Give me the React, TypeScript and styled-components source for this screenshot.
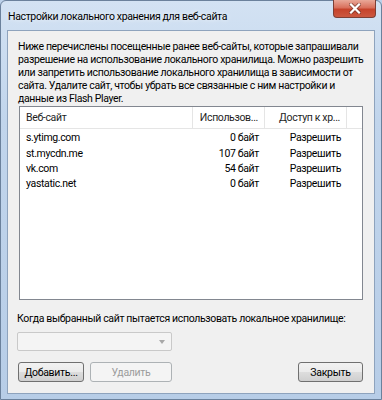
import React, {FC} from 'react';
import styled, {createGlobalStyle} from 'styled-components';

type Site = {
  host: string
  used: string
  access: string
};

const sites: Site[] = [
  {host: 's.ytimg.com', used: '0 байт', access: 'Разрешить'},
  {host: 'st.mycdn.me', used: '107 байт', access: 'Разрешить'},
  {host: 'vk.com', used: '54 байт', access: 'Разрешить'},
  {host: 'yastatic.net', used: '0 байт', access: 'Разрешить'},
];

// wrapped the same way as the dialog does it
const introLines = [
  'Ниже перечислены посещенные ранее веб-сайты, которые запрашивали',
  'разрешение на использование локального хранилища. Можно разрешить',
  'или запретить использование локального хранилища в зависимости от',
  'сайта. Удалите сайт, чтобы убрать все связанные с ним настройки и',
  'данные из Flash Player.',
];

const GlobalStyle = createGlobalStyle`
  html, body {
    margin: 0;
    padding: 0;
    background: #bcd1ea;
  }
  body {
    font-family: Roboto, "Noto Sans", "DejaVu Sans", sans-serif;
  }
`

const CloseIcon: FC = () => (
  <svg width="12" height="11" viewBox="0 0 12 11">
    <path d="M2 1.5 L10 9.5 M10 1.5 L2 9.5" stroke="#5a2a22" strokeWidth="4" strokeLinecap="square" opacity="0.55" />
    <path d="M2 1.5 L10 9.5 M10 1.5 L2 9.5" stroke="#ffffff" strokeWidth="2.2" strokeLinecap="square" />
  </svg>
);

const App: FC = () => {
  return (
    <>
      <GlobalStyle />
      <Window>
        <TitleBar>
          <Title>Настройки локального хранения для веб-сайта</Title>
          <CloseButton>
            <CloseIcon />
          </CloseButton>
        </TitleBar>
        <Client>
          <Intro>
            {introLines.map(line => (
              <IntroLine key={line}>{line}</IntroLine>
            ))}
          </Intro>

          <ListView>
            <HeaderRow>
              <HeaderCell $align="left">Веб-сайт</HeaderCell>
              <HeaderCell $align="right">Использов...</HeaderCell>
              <HeaderCell $align="right">Доступ к хр...</HeaderCell>
              <HeaderFiller />
            </HeaderRow>
            {sites.map(site => (
              <Row key={site.host}>
                <Cell $align="left">{site.host}</Cell>
                <Cell $align="right">{site.used}</Cell>
                <Cell $align="right">{site.access}</Cell>
              </Row>
            ))}
          </ListView>

          <Label>Когда выбранный сайт пытается использовать локальное хранилище:</Label>
          <Combo>
            <ComboArrow />
          </Combo>

          <ButtonBar>
            <Button type="button">Добавить...</Button>
            <Button type="button" disabled $width={82}>Удалить</Button>
            <Spacer />
            <Button type="button" $width={65}>Закрыть</Button>
          </ButtonBar>
        </Client>
      </Window>
    </>
  );
};

export default App;

const Window = styled.div`
  width: 382px;
  height: 400px;
  box-sizing: border-box;
  display: flex;
  flex-direction: column;
  border: 1px solid #6b819c;
  border-radius: 6px 6px 0 0;
  background: linear-gradient(180deg, #d3e2f3 0%, #c1d5ec 30%, #b7cde7 100%);
`

const TitleBar = styled.div`
  height: 29px;
  flex-shrink: 0;
  display: flex;
  align-items: flex-start;
  justify-content: space-between;
  padding-left: 7px;
  padding-right: 5px;
`

const Title = styled.div`
  margin-top: 8px;
  font-size: 10.5px;
  line-height: 15px;
  letter-spacing: -0.35px;
  color: #000000;
  text-shadow: 0 0 5px rgba(255, 255, 255, 0.9);
  white-space: nowrap;
`

const CloseButton = styled.div`
  width: 43px;
  height: 18px;
  margin-top: -1px;
  display: flex;
  align-items: center;
  justify-content: center;
  box-sizing: border-box;
  border: 1px solid #7d3f35;
  border-top: none;
  border-radius: 0 0 4px 4px;
  background: linear-gradient(180deg, #e9a898 0%, #d9705c 45%, #c6432b 55%, #cc5840 100%);
`

const Client = styled.div`
  flex: 1;
  margin: 0 6px 5px 6px;
  padding: 9px 11px 0 10px;
  display: flex;
  flex-direction: column;
  background: #f0f0f0;
  border: 1px solid #8ea3bd;
  font-size: 10.5px;
  line-height: 13px;
  letter-spacing: -0.35px;
  color: #000000;
`

const Intro = styled.div`
  display: flex;
  flex-direction: column;
`

const IntroLine = styled.span`
  white-space: nowrap;
`

const ListView = styled.div`
  margin: 1px 0 0 1px;
  height: 194px;
  flex-shrink: 0;
  box-sizing: border-box;
  background: #ffffff;
  border: 1px solid #828790;
`

const HeaderRow = styled.div`
  display: grid;
  grid-template-columns: 173px 72px 82px 1fr;
  height: 21px;
  border-bottom: 1px solid #e5e5e5;
  margin-bottom: 1px;
`

const HeaderCell = styled.div<{ $align: 'left' | 'right' }>`
  display: flex;
  align-items: center;
  justify-content: ${p => (p.$align === 'left' ? 'flex-start' : 'flex-end')};
  padding: 0 6px;
  border-right: 1px solid #e5e5e5;
  white-space: nowrap;
  color: #1e1e1e;
`

const HeaderFiller = styled.div`
  width: 16px;
`

const Row = styled.div`
  display: grid;
  grid-template-columns: 173px 72px 82px;
  height: 15.4px;
  align-items: center;
`

const Cell = styled.div<{ $align: 'left' | 'right' }>`
  padding-left: ${p => (p.$align === 'left' ? '6px' : '0')};
  padding-right: ${p => (p.$align === 'left' ? '0' : '6px')};
  text-align: ${p => p.$align};
  white-space: nowrap;
`

const Label = styled.div`
  margin-top: 12px;
  margin-left: -1px;
  white-space: nowrap;
`

const Combo = styled.div`
  position: relative;
  flex-shrink: 0;
  margin-top: 7px;
  margin-left: -1px;
  width: 155px;
  height: 19px;
  box-sizing: border-box;
  background: #f4f4f4;
  border: 1px solid #c9c9c9;
  border-radius: 2px;
`

const ComboArrow = styled.div`
  position: absolute;
  right: 6px;
  top: 7px;
  width: 0;
  height: 0;
  border-left: 3.5px solid transparent;
  border-right: 3.5px solid transparent;
  border-top: 4px solid #a8a8a8;
`

const ButtonBar = styled.div`
  display: flex;
  align-items: center;
  gap: 6px;
  margin-top: 11px;
`

const Spacer = styled.div`
  flex: 1;
`

const Button = styled.button<{ $width?: number }>`
  appearance: none;
  width: ${p => p.$width ?? 66}px;
  height: 20px;
  padding: 0;
  font-family: inherit;
  font-size: 10.5px;
  letter-spacing: -0.3px;
  color: #000000;
  border: 1px solid #707070;
  border-radius: 3px;
  background: linear-gradient(180deg, #f2f2f2 0%, #ebebeb 48%, #dddddd 52%, #cfcfcf 100%);

  &:disabled {
    color: #9c9c9c;
    border-color: #adb2b5;
    background: #f4f4f4;
  }
`
